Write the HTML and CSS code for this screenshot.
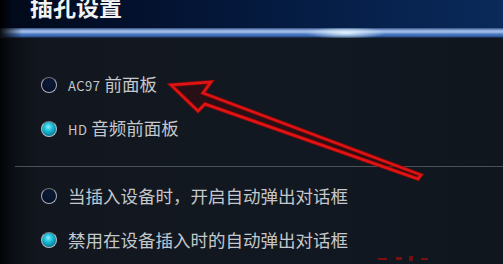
FILE: index.html
```html
<!DOCTYPE html>
<html lang="zh-CN">
<head>
    <meta charset="UTF-8">
    <meta name="viewport" content="width=device-width, initial-scale=1.0">
    <title>插孔设置</title>
    <link rel="stylesheet" href="styles.css">
</head>
<body>
    <div class="janela">
        <div class="topo">
            <h1 class="titulo">插孔设置</h1>
        </div>
        <div class="brilho"></div>

        <div class="conteudo">
            <div class="grupo">
                <label class="opcao">
                    <span class="radio"></span>
                    <span class="texto"><span class="lat">AC97</span> 前面板</span>
                </label>
                <label class="opcao">
                    <span class="radio ativo"></span>
                    <span class="texto"><span class="lat">HD</span> 音频前面板</span>
                </label>
            </div>

            <div class="divisor"></div>

            <div class="grupo">
                <label class="opcao">
                    <span class="radio"></span>
                    <span class="texto">当插入设备时，开启自动弹出对话框</span>
                </label>
                <label class="opcao">
                    <span class="radio ativo"></span>
                    <span class="texto">禁用在设备插入时的自动弹出对话框</span>
                </label>
            </div>
        </div>

        <!-- seta vermelha por cima -->
        <svg class="seta" width="503" height="264" viewBox="0 0 503 264">
            <polygon points="171,85 211,82 203,93 421,175 418,179 205,104 198,111"
                     fill="rgba(90,0,0,0.3)" stroke="#8a0a0a" stroke-width="4" stroke-linejoin="miter"/>
            <polygon points="171,85 211,82 203,93 421,175 418,179 205,104 198,111"
                     fill="none" stroke="#e01414" stroke-width="2.4" stroke-linejoin="miter"/>
            <rect x="378" y="258" width="9" height="2" fill="#7a1010"/>
            <rect x="396" y="257" width="6" height="3" fill="#7a1010"/>
            <rect x="409" y="256" width="4" height="5" fill="#701010"/>
            <rect x="421" y="258" width="7" height="2" fill="#7a1010"/>
        </svg>
    </div>
</body>
</html>
```

FILE: styles.css
```css
body {
    margin: 0;
    background-color: #10151d;
    font-family: "Noto Sans CJK SC", "Noto Sans", sans-serif;
}
.janela {
    position: relative;
    width: 503px;
    height: 264px;
    overflow: hidden;
    background: linear-gradient(90deg, #030406 0, #0b0f15 14px, #12171f 40px, #121821 60%, #10161e 100%);
}
.topo {
    height: 28px;
    background: linear-gradient(90deg, #000 0, #020a1a 12px, #041230 30%, #06204a 70%, #0a2a5a 100%);
    overflow: hidden;
}
.titulo {
    margin: -8px 0 0 30px;
    font-size: 23px;
    line-height: 28px;
    font-weight: bold;
    color: #f2f2f2;
}
.brilho {
    height: 10px;
    background:
        radial-gradient(ellipse 40px 6px at 346px 5px, rgba(235, 250, 255, 0.9), rgba(180, 220, 255, 0) 100%),
        linear-gradient(90deg, #0a0d12 0, rgba(10, 13, 18, 0) 22px),
        linear-gradient(180deg, #2c4b7c 0, #86a4d6 20%, #a9c2ea 40%, #4d7cc4 60%, #3a66ac 80%, #0f1d36 100%);
}
.conteudo {
    padding-top: 25px;
}
.grupo {
    padding-left: 41px;
}
.opcao {
    display: flex;
    align-items: center;
    gap: 11px;
    height: 44px;
}
.radio {
    box-sizing: border-box;
    width: 16px;
    height: 16px;
    border-radius: 50%;
    border: 1.5px solid #aab0b8;
    border-top-color: #6c727a;
    background: radial-gradient(circle at 50% 40%, #0c1a3a, #060d20);
}
.radio.ativo {
    border-color: #b8bec6;
    border-top-color: #7a8088;
    background: radial-gradient(circle at 45% 35%, #8cf0ff 0, #22c4dc 30%, #0a8ca8 65%, #044a60 100%);
}
.texto {
    font-size: 17.5px;
    color: #c4c7cb;
    line-height: 20px;
}
.lat {
    font-size: 13px;
    letter-spacing: 0.5px;
}
.divisor {
    height: 1px;
    margin: 15px 0 7px 15px;
    background-color: #4b5159;
}
.seta {
    position: absolute;
    left: 0;
    top: 0;
    pointer-events: none;
}
```
